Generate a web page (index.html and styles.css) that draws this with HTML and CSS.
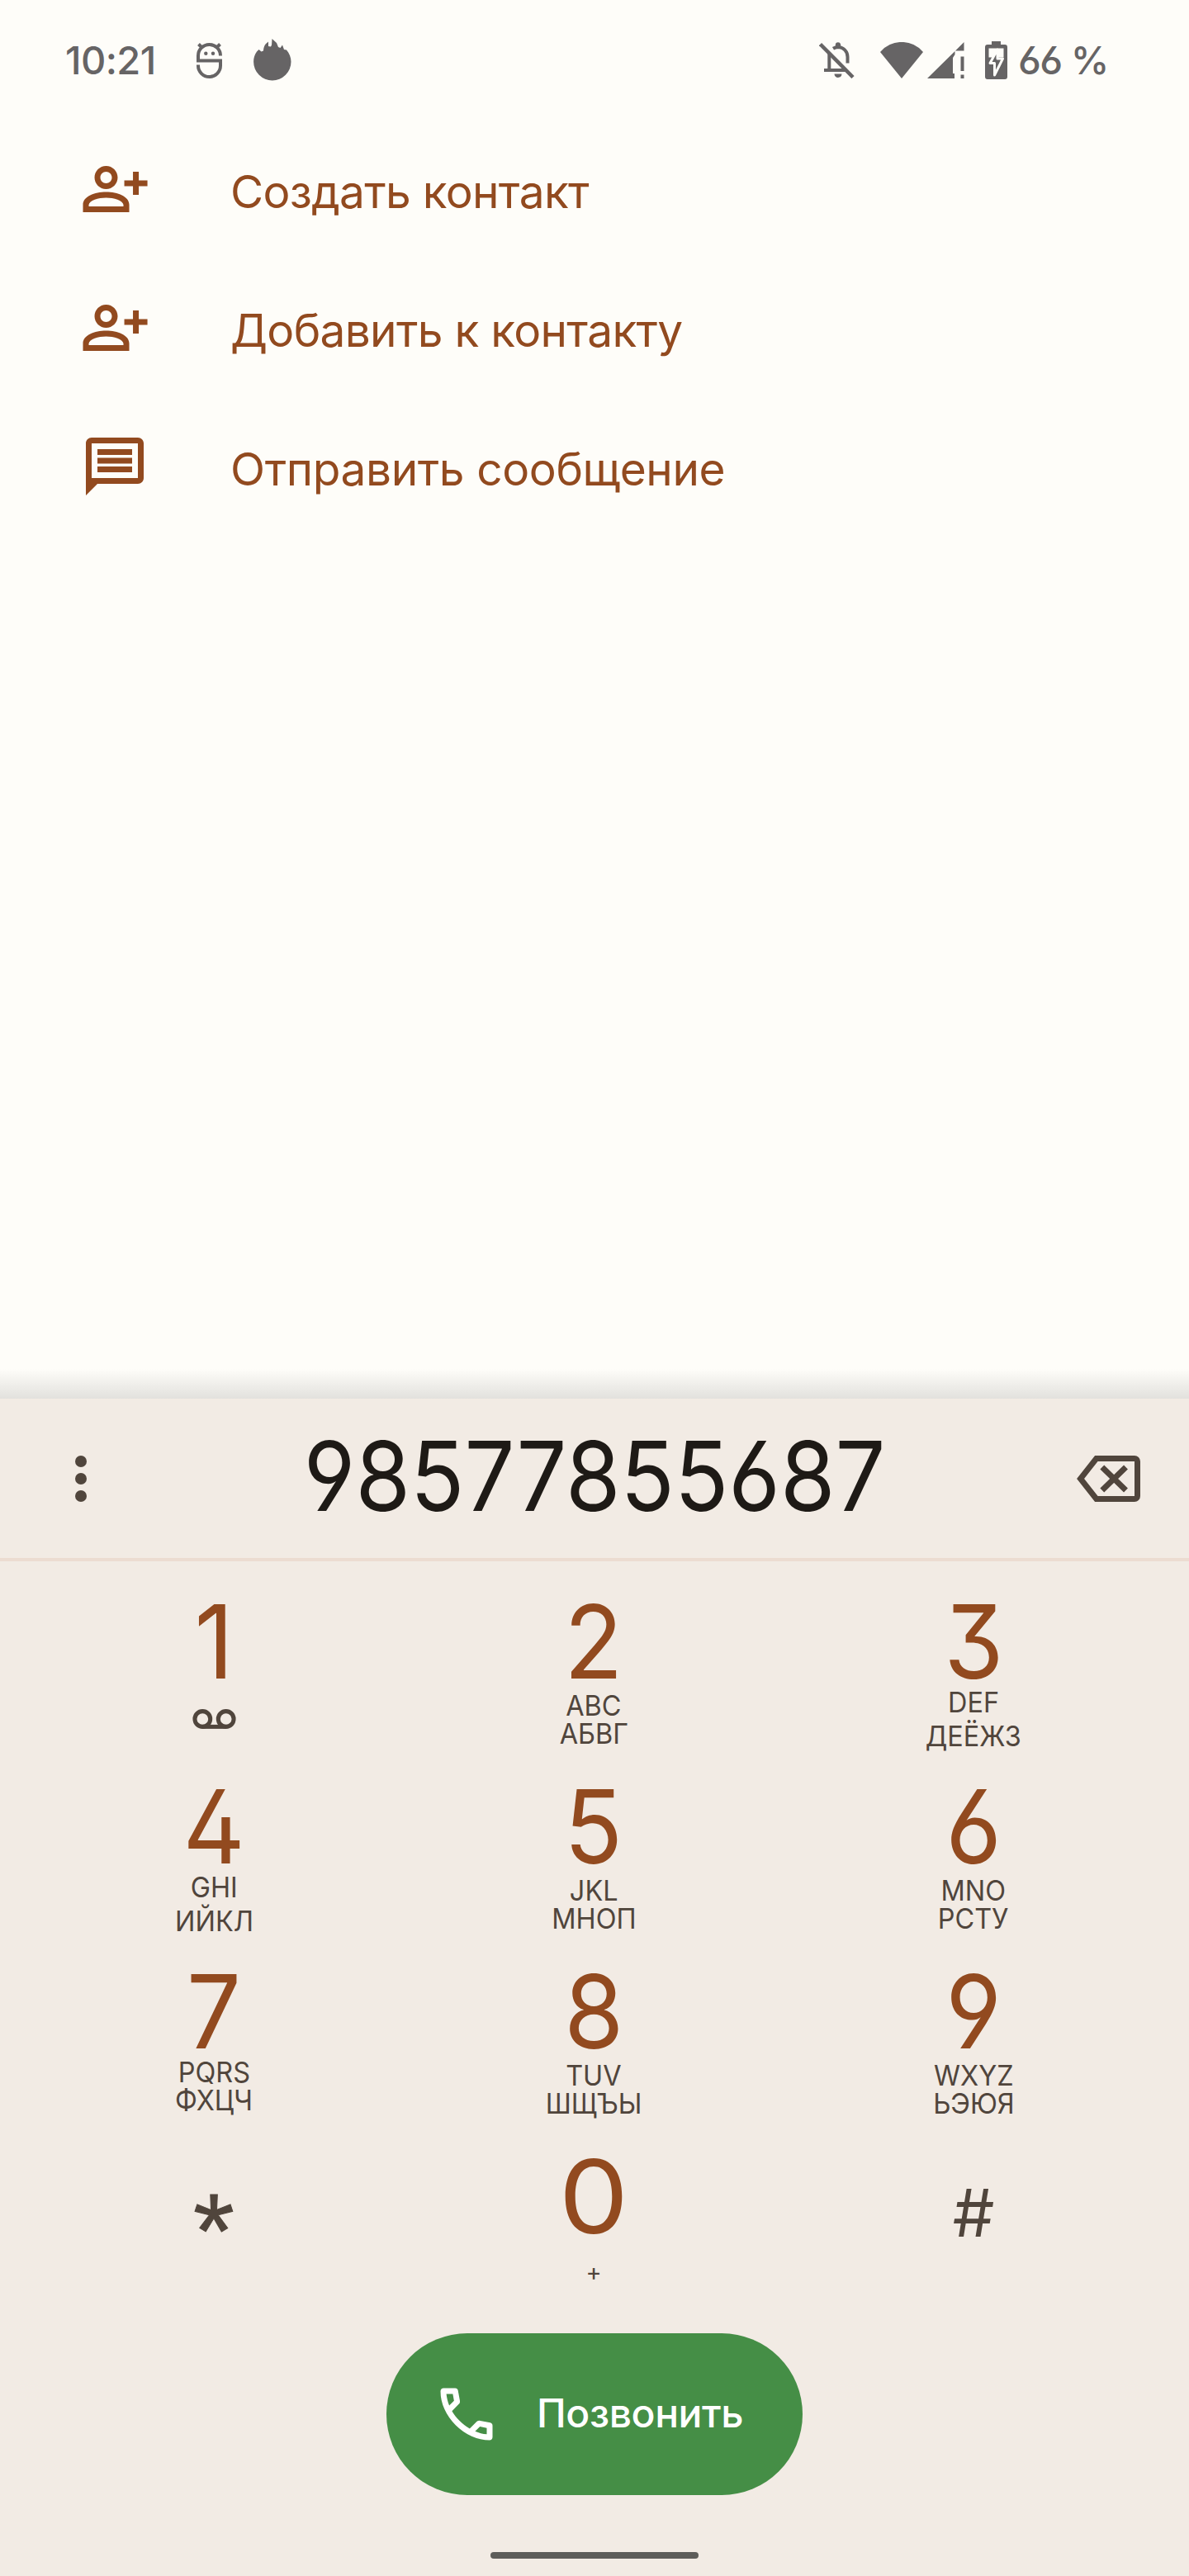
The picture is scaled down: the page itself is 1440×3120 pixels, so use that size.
FILE: index.html
```html
<!DOCTYPE html>
<html lang="ru">
<head>
  <meta charset="UTF-8" />
  <title>Телефон</title>
  <meta name="viewport" content="width=device-width, initial-scale=1.0" />
  <link rel="stylesheet" href="styles.css">
</head>
<body>

<div class="screen">
  <!-- Строка состояния -->
  <header class="status">
    <span class="time">10:21</span>
    <svg class="icon-app" width="31" height="44" viewBox="0 0 31 44" fill="none" stroke="currentColor" stroke-width="4">
      <path d="M29 16.5a13.5 13.5 0 0 0-27 0v6h27v6a13.5 13.5 0 0 1-27 0v-1" />
      <path d="M2.5 2.5l5 5M28.5 2.5l-5 5" />
      <circle cx="11.3" cy="13.7" r="2.2" fill="currentColor" stroke="none" />
      <circle cx="20" cy="13.7" r="2.2" fill="currentColor" stroke="none" />
    </svg>
    <svg class="icon-fire" width="46" height="51" viewBox="0 0 46 51" fill="currentColor">
      <path d="M4 15.5L6.500 13l3 2.500 2.500-1c0-3 1-6.500 3-8.500l3-2.500v5.500l3 .5 1-2 .5-7.500 5.500 5 2 5 2.500 1 2.500-3.500 2 5.500 3 .5c3.500 4 5.500 9 5.500 14.300a22.700 22.700 0 0 1-45.400 0C0 23.500 1.500 19 4 15.500z" />
    </svg>

    <div class="status-right">
      <svg class="icon-bell" width="43" height="44" viewBox="0 0 43 44" fill="none" stroke="currentColor" stroke-width="4">
        <path d="M12.3 13.5V34M6 34h28M34.5 25.500V18c0-6.500-4.500-11.500-11.500-12-2.200 0-4 .6-6 1.800" />
        <path d="M1.5 2.5l39.500 40" stroke-width="4.5" />
        <circle cx="23" cy="3.5" r="3.2" fill="currentColor" stroke="none" />
        <path d="M18.5 38.5h9a4.500 4.500 0 0 1-9 0z" fill="currentColor" stroke="none" />
      </svg>
      <svg class="icon-wifi" width="52" height="44" viewBox="0 0 52 44" fill="currentColor">
        <path d="M0 12a34 34 0 0 1 52 0L26 44z" />
      </svg>
      <svg class="icon-signal" width="45" height="44" viewBox="0 0 45 44" fill="currentColor">
        <path d="M0 44L33.5 11v4L31 19v19h2v6zM34 10.5L44.5 0v10.500zM40.500 17.500h4v17.500h-4zM40.500 39.500h4V44h-4z" />
      </svg>
      <svg class="icon-battery" width="27" height="46" viewBox="0 0 27 46">
        <path d="M8 0h11v4h5a3 3 0 0 1 3 3v36a3 3 0 0 1-3 3H3a3 3 0 0 1-3-3V7a3 3 0 0 1 3-3h5z" fill="currentColor" />
        <path class="battery-level" d="M4.5 8.500h18v11h-18z" />
        <path class="battery-bolt" d="M15 10L6 26.500h5.500V41L21.500 21H15z" />
      </svg>
      <span class="percent">66 %</span>
    </div>
  </header>

  <!-- Действия с номером -->
  <ul class="actions">
    <li>
      <svg width="84" height="84" viewBox="0 0 24 24" fill="currentColor">
        <path d="M13 8c0-2.210-1.790-4-4-4S5 5.790 5 8s1.790 4 4 4 4-1.790 4-4zm-2 0c0 1.100-.9 2-2 2s-2-.9-2-2 .9-2 2-2 2 .9 2 2zM9 13c-4 0-8 1.600-8 4.400V20h16v-2.600C17 14.600 13 13 9 13zm6 5H3v-.6C3.200 16 6.300 15 9 15s5.800 1 6 2.400zM20.300 11v3h-2v-3h-3V9h3V6h2v3h3v2z" />
      </svg>
      <span>Создать контакт</span>
    </li>
    <li>
      <svg width="84" height="84" viewBox="0 0 24 24" fill="currentColor">
        <path d="M13 8c0-2.210-1.790-4-4-4S5 5.790 5 8s1.790 4 4 4 4-1.790 4-4zm-2 0c0 1.100-.9 2-2 2s-2-.9-2-2 .9-2 2-2 2 .9 2 2zM9 13c-4 0-8 1.600-8 4.400V20h16v-2.600C17 14.600 13 13 9 13zm6 5H3v-.6C3.200 16 6.300 15 9 15s5.800 1 6 2.400zM20.300 11v3h-2v-3h-3V9h3V6h2v3h3v2z" />
      </svg>
      <span>Добавить к контакту</span>
    </li>
    <li>
      <svg width="84" height="84" viewBox="0 0 24 24" fill="currentColor">
        <path d="M4 4h16v12H4V4m0-2c-1.100 0-2 .9-2 2v18l4-4h14c1.100 0 2-.9 2-2V4c0-1.100-.9-2-2-2H4zm2 10h12v2H6v-2zm0-3h12v2H6V9zm0-3h12v2H6V6z" />
      </svg>
      <span class="wide">Отправить сообщение</span>
    </li>
  </ul>

  <div class="shadow"></div>

  <!-- Панель набора -->
  <section class="dialer">
    <div class="number-bar">
      <svg width="84" height="84" viewBox="0 0 24 24" fill="currentColor">
        <circle cx="12" cy="6" r="2" />
        <circle cx="12" cy="12" r="2" />
        <circle cx="12" cy="18" r="2" />
      </svg>
      <span class="number">98577855687</span>
      <svg width="77" height="56" viewBox="0 0 22 16" fill="none" stroke="currentColor" stroke-width="2">
        <path d="M6.8 1H20a1 1 0 0 1 1 1v12a1 1 0 0 1-1 1H6.800L1.300 8z" />
        <path d="M8.8 4l8.200 8M17 4l-8.200 8" />
      </svg>
    </div>

    <div class="keypad">
      <div class="key">
        <span class="digit">1</span>
        <svg class="voicemail" width="53" height="24" viewBox="0 0 24 11" fill="none" stroke="currentColor" stroke-width="2.3">
          <circle cx="5.5" cy="5.5" r="4.300" />
          <circle cx="18.5" cy="5.5" r="4.300" />
          <path d="M5.5 9.800h13" />
        </svg>
      </div>
      <div class="key">
        <span class="digit">2</span>
        <span class="letters">ABC</span>
        <span class="letters">АБВГ</span>
      </div>
      <div class="key tall raised">
        <span class="digit">3</span>
        <span class="letters">DEF</span>
        <span class="letters">ДЕЁЖЗ</span>
      </div>
      <div class="key tall raised">
        <span class="digit">4</span>
        <span class="letters">GHI</span>
        <span class="letters">ИЙКЛ</span>
      </div>
      <div class="key">
        <span class="digit">5</span>
        <span class="letters">JKL</span>
        <span class="letters">МНОП</span>
      </div>
      <div class="key">
        <span class="digit">6</span>
        <span class="letters">MNO</span>
        <span class="letters">РСТУ</span>
      </div>
      <div class="key raised">
        <span class="digit">7</span>
        <span class="letters">PQRS</span>
        <span class="letters">ФХЦЧ</span>
      </div>
      <div class="key">
        <span class="digit">8</span>
        <span class="letters">TUV</span>
        <span class="letters">ШЩЪЫ</span>
      </div>
      <div class="key">
        <span class="digit">9</span>
        <span class="letters">WXYZ</span>
        <span class="letters">ЬЭЮЯ</span>
      </div>
      <div class="key">
        <span class="star">*</span>
      </div>
      <div class="key">
        <span class="digit zero">0</span>
        <span class="plus">+</span>
      </div>
      <div class="key">
        <span class="hash">#</span>
      </div>
    </div>

    <button class="call" type="button">
      <svg width="84" height="84" viewBox="0 0 24 24" fill="currentColor">
        <path d="M19.950 21q-3.125 0-6.175-1.362T8.225 15.780t-3.862-5.550T3 4.050q0-.45.3-.75t.75-.3H8.100q.35 0 .625.238t.325.562l.65 3.500q.05.4-.025.675T9.400 8.450L6.975 10.900q.5.925 1.187 1.787t1.513 1.663q.775.775 1.625 1.438T13.100 17l2.350-2.350q.225-.225.588-.337t.712-.063l3.450.7q.35.1.575.363T21 15.900v4.050q0 .45-.3.75t-.75.3M6.025 9l1.650-1.650L7.250 5H5.025q.125 1.025.35 2.025T6.025 9m8.950 8.950q.975.425 1.988.675T19 18.950v-2.200l-2.350-.475z" />
      </svg>
      <span>Позвонить</span>
    </button>

    <div class="home-bar"></div>
  </section>
</div>

</body>
</html>
```
FILE: styles.css
```css
* {
  box-sizing: border-box;
}

body {
  margin: 0;
  background: #fefdf9;
  font-family: 'Inter', 'Roboto', sans-serif;
  font-feature-settings: "ss01";
}

svg {
  display: block;
  flex: none;
}

.screen {
  width: 1440px;
  height: 3120px;
  display: flex;
  flex-direction: column;
}

/* Строка состояния */
.status {
  height: 145px;
  padding: 0 100px 0 79px;
  display: flex;
  align-items: center;
  color: #666465;
  font-size: 47px;
  font-weight: 500;
  white-space: nowrap;
}

.time {
  width: 159px;
  letter-spacing: -0.6px;
}

.icon-fire {
  margin-left: 38px;
}

.status-right {
  margin-left: auto;
  display: flex;
  align-items: center;
}

.icon-wifi {
  margin-left: 31px;
}

.icon-signal {
  margin-left: 5px;
}

.icon-battery {
  margin-left: 25px;
}

.battery-level {
  fill: #fefdf9;
}

.battery-bolt {
  fill: currentColor;
  stroke: #fefdf9;
  stroke-width: 3;
  stroke-linejoin: round;
}

.percent {
  width: 107px;
  margin-left: 13px;
  letter-spacing: -1.5px;
}

/* Действия с номером */
.actions {
  margin: 0;
  padding: 0;
  list-style: none;
  color: #924a1f;
}

.actions li {
  height: 168px;
  padding-left: 97px;
  display: flex;
  align-items: center;
  gap: 98px;
  font-size: 55px;
  letter-spacing: -0.7px;
}

.actions span {
  padding-top: 6px;
}

.actions .wide {
  letter-spacing: -0.4px;
}

.shadow {
  height: 36px;
  margin-top: auto;
  background: linear-gradient(#fefdf9, #e2e1dd);
}

/* Панель набора */
.dialer {
  height: 1426px;
  background: #f2ebe4;
  color: #50453c;
}

.number-bar {
  height: 197px;
  padding: 0 59px 0 56px;
  display: flex;
  align-items: center;
  border-bottom: 4px solid #ecdcd1;
}

.number {
  flex: 1;
  padding: 0 4px 6px 0;
  text-align: center;
  font-size: 117px;
  line-height: 120px;
  color: #1e1a16;
  transform: scaleX(0.92);
}

.keypad {
  padding: 35px 31px 0 29px;
  display: grid;
  grid-template-columns: repeat(3, 460px);
  grid-auto-rows: 224px;
}

.key {
  display: flex;
  flex-direction: column;
  align-items: center;
}

.digit {
  margin-bottom: -1px;
  font-size: 124px;
  line-height: 124px;
  color: #924a1f;
  transform: scaleX(0.94);
}

.zero {
  transform: scaleX(1.08);
}

.letters {
  font-size: 34.5px;
  line-height: 34px;
  transform: scaleX(0.94);
}

.raised .digit {
  margin-bottom: -5px;
}

.tall .letters + .letters {
  margin-top: 7px;
}

.voicemail {
  margin-top: 21px;
}

.plus {
  margin-top: 14px;
  font-size: 29px;
  line-height: 34px;
}

.star {
  padding-top: 40px;
  font-family: 'Liberation Sans', sans-serif;
  font-size: 128px;
  line-height: 128px;
  -webkit-text-stroke: 1px #50453c;
}

.hash {
  padding-top: 42px;
  font-size: 80px;
  line-height: 80px;
}

.call {
  width: 504px;
  height: 196px;
  margin: 4px auto 0;
  padding: 0 0 0 55px;
  display: flex;
  align-items: center;
  gap: 43px;
  border: none;
  border-radius: 98px;
  background: #458e46;
  color: white;
  font-family: inherit;
  font-size: 48px;
  font-weight: 500;
  letter-spacing: -0.4px;
}

.call span {
  padding-bottom: 3px;
}

.home-bar {
  width: 252px;
  height: 8px;
  margin: 69px auto 0;
  border-radius: 4px;
  background: #5e5d5a;
}
```
